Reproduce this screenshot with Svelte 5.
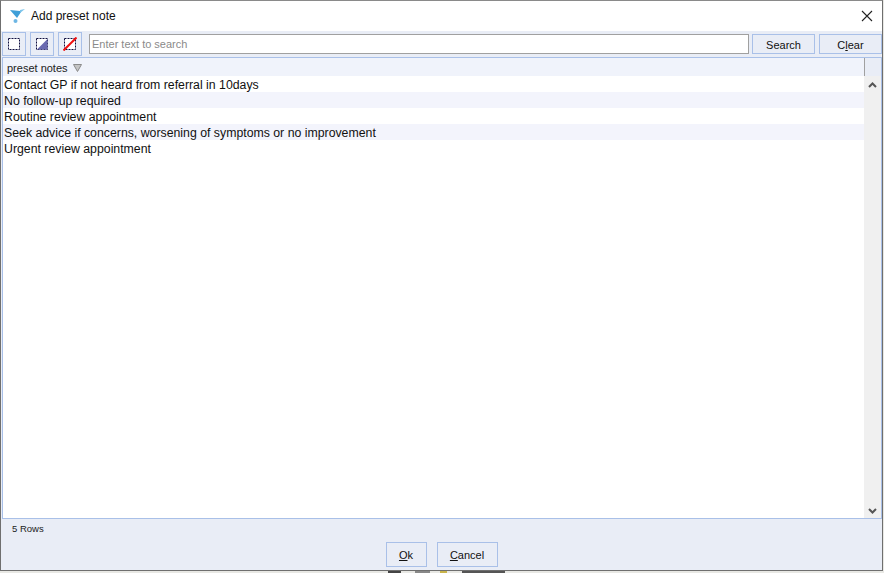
<script lang="ts">
  const notes = [
    'Contact GP if not heard from referral in 10days',
    'No follow-up required',
    'Routine review appointment',
    'Seek advice if concerns, worsening of symptoms or no improvement',
    'Urgent review appointment'
  ];
</script>

<div class="page">
  <div class="dialog">
    <header class="titlebar">
      <svg class="logo" width="18" height="18" viewBox="0 0 18 18">
        <path d="M1 3 L11 4 L12 5 L8 11 Z" fill="#3f9fd8" />
        <path d="M11 3 L16 2 L11 6 Z" fill="#7cc4ea" />
        <circle cx="6.5" cy="14" r="2" fill="#6db6e4" />
      </svg>
      <span class="title">Add preset note</span>
      <svg class="close" width="12" height="12" viewBox="0 0 12 12">
        <path d="M1 1 L11 11 M11 1 L1 11" stroke="#222" stroke-width="1.1" fill="none" />
      </svg>
    </header>

    <div class="toolbar">
      <button class="tool" aria-label="Select all">
        <svg width="14" height="14" viewBox="0 0 14 14">
          <rect class="dash" x="1.5" y="1.5" width="11" height="11" />
        </svg>
      </button>
      <button class="tool" aria-label="Invert selection">
        <svg width="14" height="14" viewBox="0 0 14 14">
          <rect class="dash" x="1.5" y="1.5" width="11" height="11" />
          <path d="M12.5 2 V12.5 H2 Z" fill="#6a6ab0" />
        </svg>
      </button>
      <button class="tool" aria-label="Select none">
        <svg width="14" height="14" viewBox="0 0 14 14">
          <rect class="dash" x="1.5" y="1.5" width="11" height="11" />
          <path d="M0.5 13.5 L13.5 0.5" stroke="#f01010" stroke-width="2" />
        </svg>
      </button>
      <input class="search" placeholder="Enter text to search" />
      <button class="btn search-btn">Search</button>
      <button class="btn clear-btn">C<u>l</u>ear</button>
    </div>

    <div class="grid">
      <div class="table">
        <div class="head">
          <span>preset notes</span>
          <svg width="9" height="8" viewBox="0 0 9 8">
            <path d="M0.5 0.5 H8.5 L4.5 7.5 Z" fill="#c4c4c4" stroke="#8a8a8a" />
          </svg>
        </div>
        <div class="rows">
          {#each notes as note, i}
            <div class="row" class:alt={i % 2 === 1}>{note}</div>
          {/each}
        </div>
      </div>
      <div class="scroll">
        <div class="scroll-top"></div>
        <div class="track">
          <svg width="9" height="6" viewBox="0 0 9 6">
            <path d="M1 5 L4.5 1.5 L8 5" stroke="#555" stroke-width="2" fill="none" />
          </svg>
          <svg width="9" height="6" viewBox="0 0 9 6">
            <path d="M1 1 L4.5 4.5 L8 1" stroke="#555" stroke-width="2" fill="none" />
          </svg>
        </div>
      </div>
    </div>

    <div class="status">5 Rows</div>

    <footer class="actions">
      <button class="btn ok"><u>O</u>k</button>
      <button class="btn cancel"><u>C</u>ancel</button>
    </footer>
  </div>
  <!-- sliver of the windows behind the dialog -->
  <div class="behind">
    <i class="bit dark"></i>
    <i class="bit grey"></i>
    <i class="bit gold"></i>
    <i class="bit text"></i>
  </div>
</div>

<style>
  :global(body) {
    margin: 0;
    background: #e8e8e4;
  }

  .page {
    width: 884px;
    height: 573px;
    overflow: hidden;
  }

  .dialog {
    width: 883px;
    height: 571px;
    box-sizing: border-box;
    border: 1px solid #6f6f6f;
    border-top-color: #8a8a8a;
    background: #e9edf6;
    display: flex;
    flex-direction: column;
    font-family: "Liberation Sans", Arial, sans-serif;
    color: #111;
  }

  .titlebar {
    height: 30px;
    flex: none;
    box-sizing: border-box;
    background: #fff;
    display: flex;
    align-items: center;
    padding: 0 9px 0 8px;
    gap: 4px;
  }

  .title {
    font-size: 12px;
    flex: 1;
  }

  .toolbar {
    height: 26px;
    flex: none;
    display: flex;
    align-items: center;
    padding-left: 1px;
    box-sizing: border-box;
  }

  button {
    font-family: inherit;
    font-size: 11px;
    color: #111;
    background: #e9edf6;
    border: 1px solid #a9c0e8;
    border-radius: 0;
    padding: 0;
  }

  .tool {
    width: 24px;
    height: 24px;
    margin-right: 4px;
    display: flex;
    align-items: center;
    justify-content: center;
  }

  .dash {
    fill: #fff;
    stroke: #101040;
    stroke-dasharray: 2 1;
  }

  .search {
    width: 660px;
    height: 20px;
    box-sizing: border-box;
    margin-left: 3px;
    margin-right: 3px;
    padding: 0 2px;
    border: 1px solid #a0a0a0;
    background: #fff;
    font-family: inherit;
    font-size: 11px;
  }

  .search::placeholder {
    color: #8a8a8a;
    opacity: 1;
  }

  .btn {
    height: 20px;
  }

  .toolbar .btn {
    padding-top: 2px;
  }

  .search-btn {
    width: 63px;
    margin-right: 4px;
  }

  .clear-btn {
    width: 63px;
  }

  .grid {
    height: 462px;
    flex: none;
    margin-left: 1px;
    box-sizing: border-box;
    border: 1px solid #a9c0e8;
    display: flex;
    background: #fff;
  }

  .table {
    flex: 1;
    min-width: 0;
  }

  .head {
    height: 18px;
    box-sizing: border-box;
    padding: 1px 0 0 4px;
    background: #f0f3fb;
    display: flex;
    align-items: center;
    gap: 5px;
    font-size: 11px;
    color: #222;
  }

  .row {
    height: 16px;
    line-height: 18px;
    font-size: 12.3px;
    padding-left: 1px;
    white-space: nowrap;
  }

  .row.alt {
    background: #f3f4fc;
  }

  .scroll {
    width: 17px;
    flex: none;
    display: flex;
    flex-direction: column;
  }

  .scroll-top {
    height: 18px;
    flex: none;
    background: #e9edf6;
    border-left: 1px solid #a0a0a0;
  }

  .track {
    flex: 1;
    background: #f0f0f0;
    display: flex;
    flex-direction: column;
    justify-content: space-between;
    align-items: center;
    padding: 6px 0 4px;
  }

  .status {
    height: 23px;
    flex: none;
    font-size: 9.5px;
    line-height: 19px;
    padding-left: 11px;
    color: #222;
  }

  .actions {
    flex: 1;
    display: flex;
    justify-content: center;
    align-items: flex-start;
    gap: 10px;
  }

  .actions .btn {
    height: 25px;
  }

  .ok {
    width: 41px;
  }

  .cancel {
    width: 61px;
  }

  .behind {
    height: 2px;
    display: flex;
    padding-left: 388px;
  }

  .bit {
    display: block;
    height: 2px;
  }

  .dark {
    width: 13px;
    background: #444;
    margin-right: 14px;
  }

  .grey {
    width: 15px;
    background: #888;
    margin-right: 10px;
  }

  .gold {
    width: 7px;
    background: #c8b34a;
    margin-right: 15px;
  }

  .text {
    width: 43px;
    background: #555;
  }
</style>
